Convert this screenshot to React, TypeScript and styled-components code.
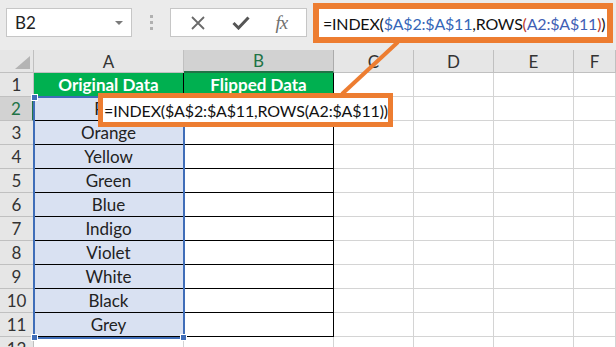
import React from 'react';
import styled, { createGlobalStyle } from 'styled-components';

const GlobalStyle = createGlobalStyle`
  html, body {
    margin: 0;
    padding: 0;
    background: #ffffff;
    overflow: hidden;
  }
  body {
    font-family: Lato, "Open Sans", Arial, sans-serif;
  }
`;

const ORANGE = '#ED7D31';
const RANGE_BLUE = '#3F6DB8';
const GRID = '#d4d4d4';
const HEAD_LINE = '#c0c0c0';
const SEL_GREEN = '#217346';

const Page = styled.div`
  position: relative;
  width: 616px;
  height: 347px;
  overflow: hidden;
  background: #ffffff;
`;

const Toolbar = styled.div`
  height: 50px;
  background: #ebebeb;
  display: flex;
  align-items: flex-start;
  padding: 8px 0 0 6px;
  box-sizing: border-box;
`;

const NameBox = styled.div`
  width: 126px;
  height: 29px;
  box-sizing: border-box;
  background: #fff;
  border: 1px solid #c6c6c6;
  display: flex;
  align-items: center;
  justify-content: space-between;
  padding: 0 8px 0 8px;
  font-size: 17px;
  color: #222;
`;

const Caret = styled.span`
  width: 0;
  height: 0;
  border-left: 4px solid transparent;
  border-right: 4px solid transparent;
  border-top: 4px solid #7a7a7a;
`;

const Grip = styled.div`
  width: 38px;
  height: 29px;
  display: flex;
  flex-direction: column;
  align-items: center;
  justify-content: center;
  gap: 3px;
`;

const GripDot = styled.span`
  width: 3px;
  height: 3px;
  background: #b0b0b0;
`;

const ButtonBox = styled.div`
  width: 137px;
  height: 29px;
  box-sizing: border-box;
  background: #fff;
  border: 1px solid #c6c6c6;
  display: flex;
  align-items: center;
  justify-content: space-around;
  padding: 0 6px;
`;

const Fx = styled.span`
  font-family: "Liberation Serif", "DejaVu Serif", serif;
  font-style: italic;
  font-size: 19px;
  color: #707070;
  letter-spacing: -1px;
`;

const FormulaInput = styled.div`
  position: absolute;
  left: 313px;
  top: 3px;
  width: 300px;
  height: 40px;
  box-sizing: border-box;
  background: #fff;
  border: 6px solid ${ORANGE};
  display: flex;
  align-items: center;
  padding-left: 4px;
  font-size: 16px;
  letter-spacing: -0.2px;
  color: #111;
  white-space: nowrap;
  overflow: hidden;
`;

const Tok = styled.span<{ $c?: string }>`
  color: ${({ $c }) => $c || '#111'};
`;

const Cursor = styled.span`
  display: inline-block;
  width: 1px;
  height: 20px;
  background: #000;
  margin-left: 2px;
`;

const Sheet = styled.div`
  display: grid;
  grid-template-columns: 34px 150px 150px 80px 80px 80px 1fr;
  grid-template-rows: 23px repeat(12, 24px);
`;

const Corner = styled.div`
  background: #e6e6e6;
  border-right: 1px solid ${HEAD_LINE};
  border-bottom: 1px solid ${HEAD_LINE};
  box-sizing: border-box;
  display: flex;
  align-items: flex-end;
  justify-content: flex-end;
  padding: 0 3px 3px 0;
`;

const CornerTri = styled.span`
  width: 0;
  height: 0;
  border-left: 15px solid transparent;
  border-bottom: 13px solid #b4b4b4;
`;

const ColHead = styled.div<{ $sel?: boolean }>`
  background: ${({ $sel }) => ($sel ? '#d2d2d2' : '#e6e6e6')};
  color: ${({ $sel }) => ($sel ? SEL_GREEN : '#333')};
  border-right: 1px solid ${({ $sel }) => ($sel ? '#ababab' : HEAD_LINE)};
  border-bottom: ${({ $sel }) => ($sel ? `2px solid ${SEL_GREEN}` : `1px solid ${HEAD_LINE}`)};
  box-sizing: border-box;
  display: flex;
  align-items: center;
  justify-content: center;
  font-size: 17px;
`;

const RowHead = styled.div<{ $sel?: boolean }>`
  background: ${({ $sel }) => ($sel ? '#d2d2d2' : '#e6e6e6')};
  color: ${({ $sel }) => ($sel ? SEL_GREEN : '#333')};
  border-right: ${({ $sel }) => ($sel ? `2px solid ${SEL_GREEN}` : `1px solid ${HEAD_LINE}`)};
  border-bottom: 1px solid ${HEAD_LINE};
  box-sizing: border-box;
  display: flex;
  align-items: center;
  justify-content: center;
  font-size: 17px;
`;

const Cell = styled.div<{ $fill?: string; $line?: string; $bold?: boolean; $color?: string }>`
  background: ${({ $fill }) => $fill || '#fff'};
  border-right: 1px solid ${({ $line }) => $line || GRID};
  border-bottom: 1px solid ${({ $line }) => $line || GRID};
  box-sizing: border-box;
  display: flex;
  align-items: center;
  justify-content: center;
  font-size: 17px;
  font-weight: ${({ $bold }) => ($bold ? 700 : 400)};
  color: ${({ $color }) => $color || '#222'};
  white-space: nowrap;
  overflow: hidden;
`;

const RangeBox = styled.div`
  position: absolute;
  left: 33px;
  top: 96px;
  width: 152px;
  height: 243px;
  box-sizing: border-box;
  border: 2px solid ${RANGE_BLUE};
  pointer-events: none;
`;

const Handle = styled.span<{ $x: 'l' | 'r'; $y: 't' | 'b' }>`
  position: absolute;
  width: 5px;
  height: 5px;
  background: ${RANGE_BLUE};
  border: 1px solid #fff;
  ${({ $x }) => ($x === 'l' ? 'left: -4px;' : 'right: -4px;')}
  ${({ $y }) => ($y === 't' ? 'top: -4px;' : 'bottom: -4px;')}
`;

const EditBox = styled.div`
  position: absolute;
  left: 98px;
  top: 93px;
  width: 295px;
  height: 34px;
  box-sizing: border-box;
  border: 5px solid ${ORANGE};
  background: #fff;
  display: flex;
  align-items: center;
  padding-left: 1px;
  font-size: 16px;
  letter-spacing: -0.15px;
  color: #111;
  white-space: nowrap;
`;

const Connector = styled.svg`
  position: absolute;
  left: 0;
  top: 0;
  pointer-events: none;
`;

const colLetters = ['A', 'B', 'C', 'D', 'E', 'F'];
const colors = ['Red', 'Orange', 'Yellow', 'Green', 'Blue', 'Indigo', 'Violet', 'White', 'Black', 'Grey'];

export default function App() {
  const rows: React.ReactNode[] = [];
  for (let r = 1; r <= 12; r++) {
    rows.push(
      <RowHead key={`h${r}`} $sel={r === 2}>
        {r}
      </RowHead>
    );
    for (let c = 0; c < 6; c++) {
      const key = `c${r}-${c}`;
      if (r === 1 && c < 2) {
        rows.push(
          <Cell key={key} $fill="#00B050" $line="#000" $bold $color="#fff">
            {c === 0 ? 'Original Data' : 'Flipped Data'}
          </Cell>
        );
      } else if (r <= 11 && c === 0) {
        rows.push(
          <Cell key={key} $fill="#D9E1F2" $line="#000">
            {colors[r - 2]}
          </Cell>
        );
      } else if (r <= 11 && c === 1) {
        rows.push(<Cell key={key} $line="#000" />);
      } else {
        rows.push(<Cell key={key} />);
      }
    }
  }

  return (
    <Page>
      <GlobalStyle />
      <Toolbar>
        <NameBox>
          B2
          <Caret />
        </NameBox>
        <Grip>
          <GripDot />
          <GripDot />
          <GripDot />
        </Grip>
        <ButtonBox>
          <svg width="16" height="14" viewBox="0 0 16 14">
            <path d="M2 1 L14 13 M14 1 L2 13" stroke="#6a6a6a" strokeWidth="1.8" fill="none" />
          </svg>
          <svg width="18" height="14" viewBox="0 0 18 14">
            <path d="M1.5 7 L6.5 12 L16.5 1.5" stroke="#555" strokeWidth="3" fill="none" />
          </svg>
          <Fx>fx</Fx>
        </ButtonBox>
      </Toolbar>
      <FormulaInput>
        <Tok>=INDEX(</Tok>
        <Tok $c="#3566B8">$A$2:$A$11</Tok>
        <Tok>,ROWS</Tok>
        <Tok $c="#C0392B">(</Tok>
        <Tok $c="#3F5FB5">A2:$A$11</Tok>
        <Tok $c="#C0392B">)</Tok>
        <Tok>)</Tok>
        <Cursor />
      </FormulaInput>
      <Sheet>
        <Corner>
          <CornerTri />
        </Corner>
        {colLetters.map((l) => (
          <ColHead key={l} $sel={l === 'B'}>
            {l}
          </ColHead>
        ))}
        {rows}
      </Sheet>
      <RangeBox>
        <Handle $x="l" $y="t" />
        <Handle $x="l" $y="b" />
        <Handle $x="r" $y="b" />
      </RangeBox>
      <EditBox>=INDEX($A$2:$A$11,ROWS(A2:$A$11))</EditBox>
      <Connector width="616" height="347">
        <line x1="398" y1="42" x2="342" y2="94" stroke={ORANGE} strokeWidth="4" />
      </Connector>
    </Page>
  );
}
